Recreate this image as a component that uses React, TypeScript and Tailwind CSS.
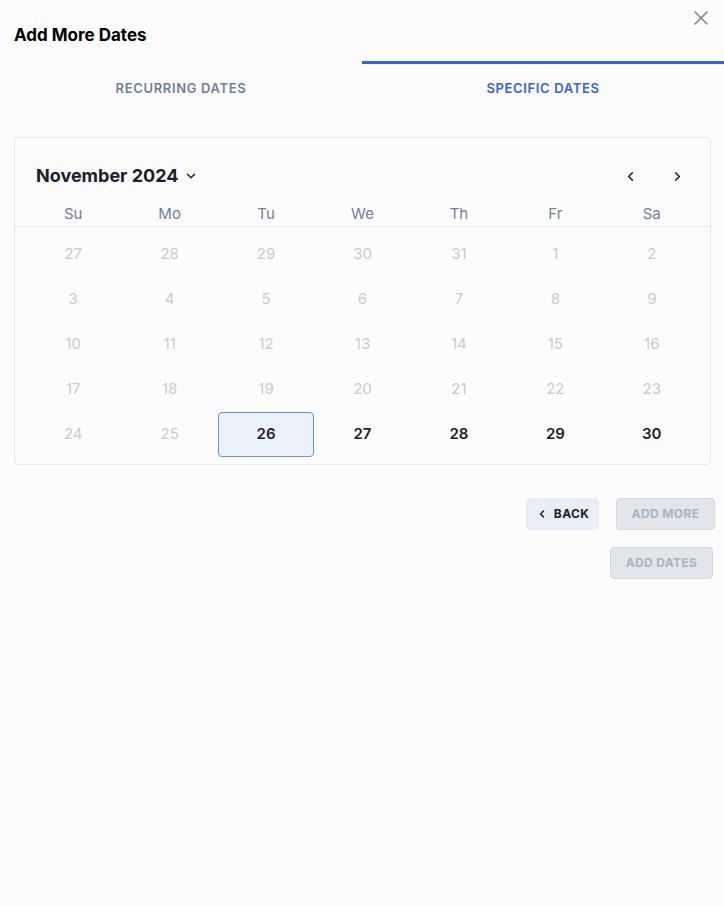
import { ChevronDown, ChevronLeft, ChevronRight, X } from "lucide-react";

const weekdays = ["Su", "Mo", "Tu", "We", "Th", "Fr", "Sa"];

// out-of-range days greyed, only the last row is pickable
const weeks: { d: number; on: boolean }[][] = [
  [27, 28, 29, 30, 31, 1, 2].map((d) => ({ d, on: false })),
  [3, 4, 5, 6, 7, 8, 9].map((d) => ({ d, on: false })),
  [10, 11, 12, 13, 14, 15, 16].map((d) => ({ d, on: false })),
  [17, 18, 19, 20, 21, 22, 23].map((d) => ({ d, on: false })),
  [24, 25, 26, 27, 28, 29, 30].map((d, i) => ({ d, on: i >= 2 })),
];

export default function App() {
  return (
    <div className="relative h-[906px] w-[724px] overflow-hidden bg-[#fcfcfd] font-['Inter',sans-serif]">
      <button
        aria-label="Close"
        className="absolute right-[11px] top-[6px] text-[#7a869a]"
      >
        <X className="h-[24px] w-[24px]" strokeWidth={1.6} />
      </button>

      <h2 className="pl-[14px] pt-[24px] text-[17px] font-bold leading-[22px] text-black">
        Add More Dates
      </h2>

      {/* tabs */}
      <div className="mt-[15px] grid grid-cols-2">
        <div className="border-t-[3px] border-transparent pb-[16px] pt-[16px] text-center text-[13px] font-semibold uppercase leading-[16px] tracking-[0.05em] text-[#718096]">
          Recurring Dates
        </div>
        <div className="border-t-[3px] border-[#3660df] pb-[16px] pt-[16px] text-center text-[13px] font-semibold uppercase leading-[16px] tracking-[0.05em] text-[#3661d9]">
          Specific Dates
        </div>
      </div>

      {/* calendar */}
      <div className="ml-[14px] mr-[13px] mt-[25px] rounded-[4px] border border-[#e2e8f0] bg-[#fcfcfd] pb-[7px]">
        <div className="flex items-center justify-between pl-[21px] pr-[25px] pt-[26px]">
          <div className="flex items-center gap-[6px]">
            <span className="text-[18px] font-bold leading-[24px] text-[#1a202c]">
              November 2024
            </span>
            <ChevronDown className="h-[14px] w-[14px] text-[#1a202c]" strokeWidth={2.5} />
          </div>
          <div className="flex items-center gap-[32px] text-[#1a202c]">
            <ChevronLeft className="h-[15px] w-[15px]" strokeWidth={2.5} />
            <ChevronRight className="h-[15px] w-[15px]" strokeWidth={2.5} />
          </div>
        </div>

        <div className="mt-[13px] grid h-[26px] grid-cols-7 items-center border-b border-[#e2e8f0] px-[10px]">
          {weekdays.map((w) => (
            <span key={w} className="text-center text-[15px] leading-[20px] text-[#718096]">
              {w}
            </span>
          ))}
        </div>

        <div className="mt-[5px] grid grid-cols-7 px-[10px]">
          {weeks.flat().map((c, i) =>
            c.d === 26 && c.on ? (
              <div
                key={i}
                className="flex h-[45px] items-center justify-center rounded-[4px] border border-[#6d8fd6] bg-[#ebf2fe] text-[15px] font-semibold text-[#1a202c]"
              >
                {c.d}
              </div>
            ) : (
              <div
                key={i}
                className={
                  c.on
                    ? "flex h-[45px] items-center justify-center text-[15px] font-semibold text-[#1a202c]"
                    : "flex h-[45px] items-center justify-center text-[15px] text-[#c6ccd5]"
                }
              >
                {c.d}
              </div>
            )
          )}
        </div>
      </div>

      {/* actions */}
      <div className="mt-[33px] flex justify-end gap-[17px] pr-[9px]">
        <button className="flex h-[32px] w-[73px] items-center justify-center gap-[6px] rounded-[4px] bg-[#e8edf7] text-[12px] font-bold tracking-[0.03em] text-[#1a202c]">
          <ChevronLeft className="h-[12px] w-[12px]" strokeWidth={3} />
          BACK
        </button>
        <button className="h-[32px] w-[99px] rounded-[4px] border border-[#d4d9e0] bg-[#e2e6eb] text-[12px] font-bold tracking-[0.03em] text-[#a9b4c3]">
          ADD MORE
        </button>
      </div>
      <div className="mt-[17px] flex justify-end pr-[11px]">
        <button className="h-[32px] w-[103px] rounded-[4px] border border-[#d4d9e0] bg-[#e2e6eb] text-[12px] font-bold tracking-[0.03em] text-[#a9b4c3]">
          ADD DATES
        </button>
      </div>
    </div>
  );
}
